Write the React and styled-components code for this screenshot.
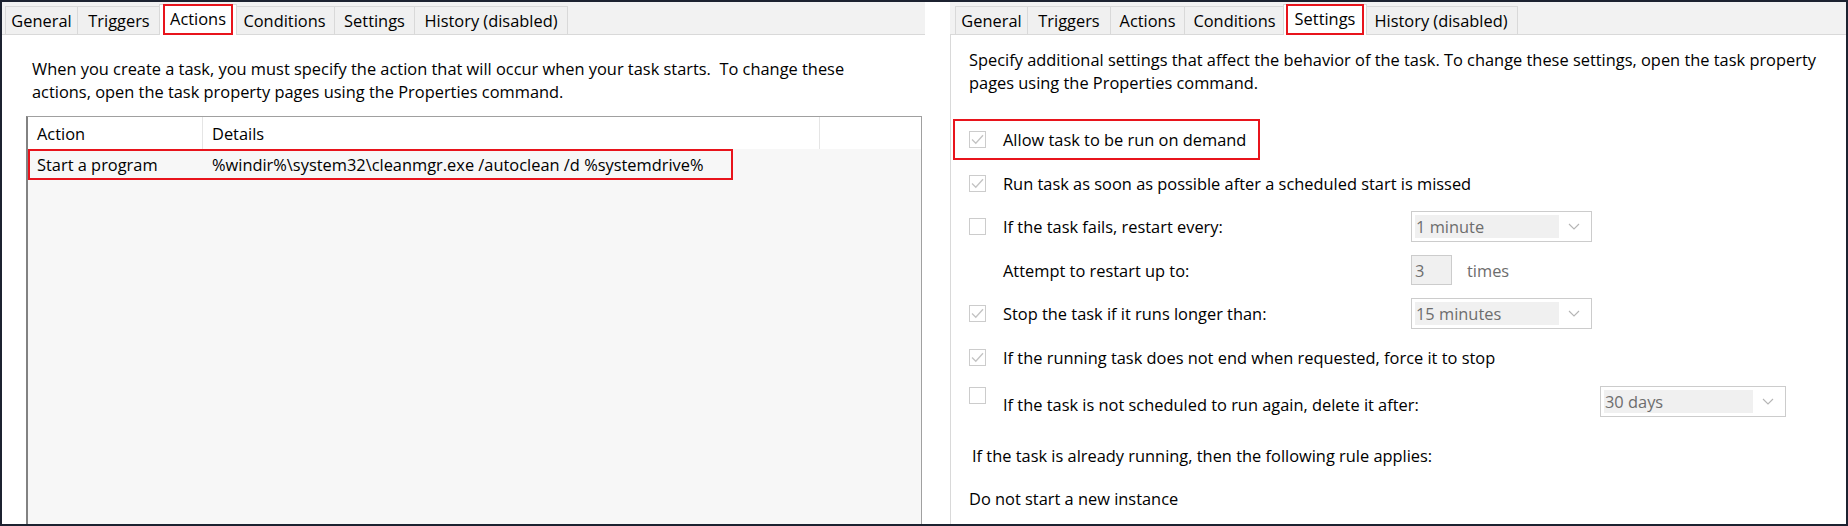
import React from "react";
import styled, { createGlobalStyle, css } from "styled-components";

const FONT = `"Open Sans", "Noto Sans", "DejaVu Sans", sans-serif`;

const Global = createGlobalStyle`
  html, body { margin: 0; padding: 0; background: #ffffff; }
  body { font-family: ${FONT}; }
  * { box-sizing: border-box; }
`;

const Frame = styled.div`
  width: 1848px;
  height: 526px;
  border: 2px solid #1c2230;
  display: flex;
  background: #ffffff;
  overflow: hidden;
  font-family: ${FONT};
  font-size: 16.4px;
  color: #000000;
`;

const Panel = styled.section`
  display: flex;
  flex-direction: column;
  width: ${(p) => p.$w || "auto"};
  flex: ${(p) => (p.$grow ? "1" : "none")};
  margin-left: ${(p) => p.$ml || 0}px;
  min-height: 0;
`;

const TabStrip = styled.div`
  height: 33px;
  flex: none;
  display: flex;
  align-items: flex-end;
  padding-left: ${(p) => p.$inset}px;
  background: #f2f2f2;
  border-bottom: 1px solid #d9d9d9;
`;

const Tab = styled.div`
  position: relative;
  flex: none;
  width: ${(p) => p.$w + (p.$active ? 4 : 1)}px;
  height: ${(p) => (p.$active ? 31 : 28)}px;
  margin: 0 ${(p) => (p.$active ? -2 : 0)}px ${(p) => (p.$active ? -1 : 0)}px
    ${(p) => (p.$active ? -2 : -1)}px;
  padding-bottom: ${(p) => (p.$active ? 3 : 0)}px;
  display: flex;
  align-items: center;
  justify-content: center;
  border: 1px solid #d9d9d9;
  border-bottom: none;
  background: ${(p) => (p.$active ? "#ffffff" : "#f0f0f0")};
  z-index: ${(p) => (p.$active ? 2 : 1)};
  white-space: nowrap;

  ${(p) =>
    p.$active &&
    css`
      &::after {
        content: "";
        position: absolute;
        top: -1px;
        bottom: 0;
        left: ${p.$mark}px;
        right: ${p.$mark}px;
        border: 2px solid #e8141c;
      }
    `}
`;

const Page = styled.div`
  flex: 1;
  min-height: 0;
  display: flex;
  flex-direction: column;
  padding: ${(p) => p.$pad};
  border-left: ${(p) => (p.$edge ? "1px solid #d9d9d9" : "none")};
`;

const Intro = styled.p`
  margin: 0;
  line-height: 23px;
  white-space: nowrap;
`;

const List = styled.div`
  flex: 1;
  margin: 13px 3px 0 -6px;
  display: flex;
  flex-direction: column;
  background: #f7f7f7;
  border-top: 1px solid #a0a0a0;
  border-right: 1px solid #a0a0a0;
  border-left: 2px solid #828282;
`;

const HeaderRow = styled.div`
  height: 32px;
  display: flex;
  background: #ffffff;
`;

const HeaderCell = styled.div`
  width: ${(p) => (p.$w ? `${p.$w}px` : "auto")};
  flex: ${(p) => (p.$w ? "none" : "1")};
  display: flex;
  align-items: center;
  padding-left: ${(p) => p.$pl}px;
  border-right: ${(p) => (p.$w ? "1px solid #e5e5e5" : "none")};
`;

const DataRow = styled.div`
  height: 31px;
  display: flex;
`;

const RowMark = styled.div`
  width: 705px;
  display: flex;
  border: 2px solid #e8141c;
`;

const Cell = styled.div`
  width: ${(p) => (p.$w ? `${p.$w}px` : "auto")};
  flex: ${(p) => (p.$w ? "none" : "1")};
  display: flex;
  align-items: center;
  padding-left: ${(p) => p.$pl}px;
  white-space: nowrap;
`;

const Settings = styled.div`
  margin-top: 24px;
  display: flex;
  flex-direction: column;
`;

const Row = styled.div`
  height: ${(p) => p.$h || 43.5}px;
  display: flex;
  align-items: ${(p) => (p.$top ? "flex-start" : "center")};
  padding-top: ${(p) => (p.$top ? 8 : 0)}px;
`;

const Marked = styled.div`
  display: flex;
  align-items: center;
  padding: 7px 12px 7px 14px;
  margin: 0 0 0 -14px;
  outline: 2px solid #e8141c;
`;

const BoxSlot = styled.div`
  width: 34px;
  flex: none;
  display: flex;
`;

const Box = styled.span`
  width: 17px;
  height: 17px;
  border: 1px solid #cccccc;
  background: #ffffff;
  display: flex;
  align-items: center;
  justify-content: center;
`;

const Label = styled.div`
  width: ${(p) => (p.$w ? `${p.$w}px` : "auto")};
  flex: none;
  white-space: nowrap;
  margin-top: ${(p) => p.$mt || 0}px;
`;

const Combo = styled.div`
  width: ${(p) => p.$w}px;
  height: 31px;
  border: 1px solid #cccccc;
  background: #ffffff;
  padding: 3px;
  display: flex;
  margin-top: ${(p) => p.$mt || 0}px;
`;

const ComboText = styled.div`
  flex: 1;
  background: #f0f0f0;
  color: #6d6d6d;
  display: flex;
  align-items: center;
  padding-left: 1px;
  white-space: nowrap;
`;

const Arrow = styled.div`
  width: 29px;
  display: flex;
  align-items: center;
  justify-content: center;
`;

const NumberBox = styled.div`
  width: 41px;
  height: 30px;
  border: 1px solid #cccccc;
  background: #f0f0f0;
  color: #6d6d6d;
  display: flex;
  align-items: center;
  padding-left: 3px;
`;

const Unit = styled.span`
  color: #6d6d6d;
  margin-left: 15px;
`;

const Note = styled.div`
  margin-top: ${(p) => p.$mt}px;
  padding-left: ${(p) => p.$pl || 0}px;
  line-height: 22px;
  white-space: nowrap;
`;

const Check = () => (
  <svg width="13" height="11" viewBox="0 0 13 11">
    <polyline points="1,5.5 4.8,9.3 12,1.2" fill="none" stroke="#c3c3c3" strokeWidth="1.3" />
  </svg>
);

const Chevron = () => (
  <svg width="12" height="7" viewBox="0 0 12 7">
    <polyline points="1,1 6,6 11,1" fill="none" stroke="#b5b5b5" strokeWidth="1.1" />
  </svg>
);

const CheckBox = ({ checked }) => (
  <BoxSlot>
    <Box>{checked && <Check />}</Box>
  </BoxSlot>
);

const DropDown = ({ w, value, mt }) => (
  <Combo $w={w} $mt={mt}>
    <ComboText>{value}</ComboText>
    <Arrow>
      <Chevron />
    </Arrow>
  </Combo>
);

const tabs = [
  { name: "General", w: 72 },
  { name: "Triggers", w: 83 },
  { name: "Actions", w: 74 },
  { name: "Conditions", w: 100 },
  { name: "Settings", w: 80 },
  { name: "History (disabled)", w: 153 },
];

const Tabs = ({ active, inset, mark }) => (
  <TabStrip $inset={inset}>
    {tabs.map((t) => (
      <Tab key={t.name} $w={t.w} $active={t.name === active} $mark={mark}>
        {t.name}
      </Tab>
    ))}
  </TabStrip>
);

export default function App() {
  return (
    <>
      <Global />
      <Frame>
        <Panel $w="923px">
          <Tabs active="Actions" inset={4} mark={3} />
          <Page $pad="22px 0 0 30px">
            <Intro>
              When you create a task, you must specify the action that will occur when your task starts.&nbsp; To change these
            </Intro>
            <Intro>actions, open the task property pages using the Properties command.</Intro>
            <List>
              <HeaderRow>
                <HeaderCell $w={175} $pl={9}>Action</HeaderCell>
                <HeaderCell $w={617} $pl={9}>Details</HeaderCell>
                <HeaderCell />
              </HeaderRow>
              <DataRow>
                <RowMark>
                  <Cell $w={173} $pl={7}>Start a program</Cell>
                  <Cell $pl={9}>%windir%\system32\cleanmgr.exe /autoclean /d %systemdrive%</Cell>
                </RowMark>
              </DataRow>
            </List>
          </Page>
        </Panel>

        <Panel $grow $ml={25}>
          <Tabs active="Settings" inset={6} mark={2} />
          <Page $pad="13px 0 0 18px" $edge>
            <Intro>
              Specify additional settings that affect the behavior of the task. To change these settings, open the task property
            </Intro>
            <Intro>pages using the Properties command.</Intro>
            <Settings>
              <Row>
                <Marked>
                  <CheckBox checked />
                  <Label>Allow task to be run on demand</Label>
                </Marked>
              </Row>
              <Row>
                <CheckBox checked />
                <Label>Run task as soon as possible after a scheduled start is missed</Label>
              </Row>
              <Row>
                <CheckBox />
                <Label $w={408}>If the task fails, restart every:</Label>
                <DropDown w={181} value="1 minute" />
              </Row>
              <Row>
                <BoxSlot />
                <Label $w={408}>Attempt to restart up to:</Label>
                <NumberBox>3</NumberBox>
                <Unit>times</Unit>
              </Row>
              <Row>
                <CheckBox checked />
                <Label $w={408}>Stop the task if it runs longer than:</Label>
                <DropDown w={181} value="15 minutes" />
              </Row>
              <Row>
                <CheckBox checked />
                <Label>If the running task does not end when requested, force it to stop</Label>
              </Row>
              <Row $top $h={44}>
                <CheckBox />
                <Label $w={597} $mt={6}>If the task is not scheduled to run again, delete it after:</Label>
                <DropDown w={186} value="30 days" mt={-1} />
              </Row>
            </Settings>
            <Note $mt={22} $pl={3}>If the task is already running, then the following rule applies:</Note>
            <Note $mt={21}>Do not start a new instance</Note>
          </Page>
        </Panel>
      </Frame>
    </>
  );
}
